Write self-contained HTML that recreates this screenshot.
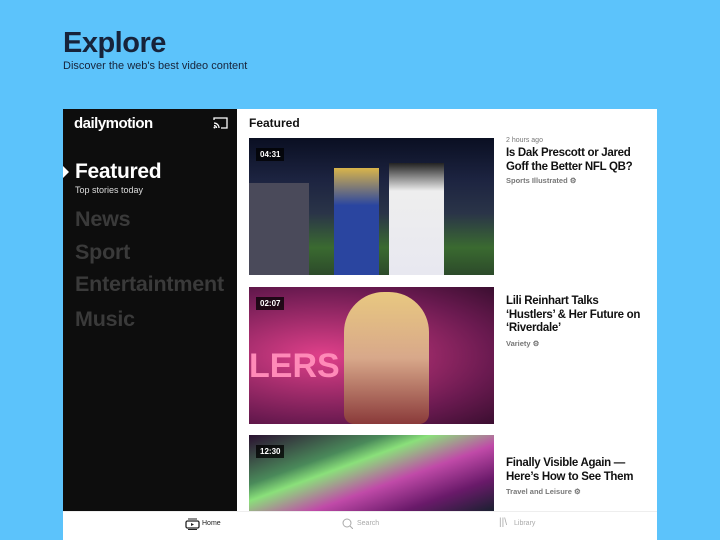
<html><head><style>
body{margin:0;width:720px;height:540px;background:#5cc3fb;font-family:"Liberation Sans",sans-serif;position:relative;overflow:hidden}
.a{position:absolute}
.t{font-weight:bold;color:#111;font-size:11.5px;line-height:13.5px;letter-spacing:-0.3px;white-space:nowrap}
.s{font-size:7.5px;color:#777;font-weight:bold}
.d{background:rgba(0,0,0,.75);color:#fff;font-size:8px;padding:2px 4px;font-weight:bold}
.nav{font-weight:900;font-size:21.5px;color:#3a3a3a;left:75px;letter-spacing:-0.2px}
</style></head><body>
<div class="a" style="left:63px;top:27px;font-size:29px;font-weight:900;color:#17233a;letter-spacing:-0.5px">Explore</div>
<div class="a" style="left:63px;top:60px;font-size:11px;color:#17233a">Discover the web's best video content</div>
<div class="a" style="left:63px;top:109px;width:594px;height:431px;background:#fff"></div>
<div class="a" style="left:63px;top:109px;width:174px;height:402px;background:#0d0d0d"></div>
<div class="a" style="left:74px;top:115px;color:#fff;font-weight:bold;font-size:15px;letter-spacing:-0.5px">dailymotion</div>
<svg class="a" style="left:213px;top:117px" width="15" height="12" viewBox="0 0 15 12"><path d="M1 3V1h13v10H8M1 6a5 5 0 0 1 5 5M1 8.5a2.5 2.5 0 0 1 2.5 2.5" stroke="#fff" stroke-width="1.3" fill="none"/><circle cx="1.5" cy="10.5" r="1" fill="#fff"/></svg>
<div class="a" style="left:63px;top:166px;width:0;height:0;border-left:6px solid #fff;border-top:6px solid transparent;border-bottom:6px solid transparent"></div>
<div class="a" style="left:75px;top:160px;font-weight:900;font-size:21px;color:#fff;letter-spacing:-0.3px">Featured</div>
<div class="a" style="left:75px;top:185px;font-size:9px;color:#ddd">Top stories today</div>
<div class="a nav" style="top:207px">News</div>
<div class="a nav" style="top:240px">Sport</div>
<div class="a nav" style="top:272px">Entertaintment</div>
<div class="a nav" style="top:307px">Music</div>
<div class="a" style="left:249px;top:116px;font-weight:bold;font-size:12px;color:#111">Featured</div>
<div class="a" style="left:249px;top:138px;width:245px;height:137px;background:linear-gradient(180deg,#0a0f22 0%,#1c2340 30%,#2a3448 55%,#3a6a30 80%,#2c4a2a 100%)"><div style="position:absolute;left:85px;top:30px;width:45px;height:107px;background:linear-gradient(#d9b44a,#2a45a0 35%,#2a45a0)"></div><div style="position:absolute;left:140px;top:25px;width:55px;height:112px;background:linear-gradient(#222 0%,#eee 25%,#e8e8f0)"></div><div style="position:absolute;left:0;top:45px;width:60px;height:92px;background:#4a4a5a"></div></div>
<div class="a d" style="left:256px;top:148px">04:31</div>
<div class="a" style="left:506px;top:137px;font-size:7px;color:#777">2 hours ago</div>
<div class="a t" style="left:506px;top:147px">Is Dak Prescott or Jared<br>Goff the Better NFL QB?</div>
<div class="a s" style="left:506px;top:176px">Sports Illustrated ⚙</div>
<div class="a" style="left:249px;top:287px;width:245px;height:137px;background:radial-gradient(ellipse at 30% 50%,#e0408a,#6a1a50 70%,#3a0e30)"><div style="position:absolute;left:0;top:60px;font-size:34px;font-weight:900;color:#ff8ab8">LERS</div><div style="position:absolute;left:95px;top:5px;width:85px;height:132px;border-radius:40px 40px 10px 10px;background:linear-gradient(#e8c880,#d8a88a 50%,#8a3a3a)"></div></div>
<div class="a d" style="left:256px;top:297px">02:07</div>
<div class="a t" style="left:506px;top:295px">Lili Reinhart Talks<br>‘Hustlers’ &amp; Her Future on<br>‘Riverdale’</div>
<div class="a s" style="left:506px;top:339px">Variety ⚙</div>
<div class="a" style="left:249px;top:435px;width:245px;height:76px;background:linear-gradient(160deg,#2a1030 0%,#4a8a5a 30%,#8ae07a 40%,#c04aa8 60%,#6a1a6a 80%,#1a2030)"></div>
<div class="a d" style="left:256px;top:445px">12:30</div>
<div class="a t" style="left:506px;top:457px">Finally Visible Again —<br>Here’s How to See Them</div>
<div class="a s" style="left:506px;top:487px">Travel and Leisure ⚙</div>
<div class="a" style="left:63px;top:511px;width:594px;height:1px;background:#eee"></div>
<svg class="a" style="left:185px;top:518px" width="15" height="12"><rect x="1" y="3" width="13" height="7" rx="1.5" stroke="#222" stroke-width="1.3" fill="none"/><path d="M3 1h9M3 11.5h9" stroke="#222"/><path d="M6 5l3 1.5-3 1.5z" fill="#222"/></svg>
<div class="a" style="left:202px;top:520px;font-size:7px;color:#222">Home</div>
<svg class="a" style="left:342px;top:518px" width="11" height="11"><circle cx="5" cy="5" r="4" stroke="#aaa" fill="none"/><path d="M8 8l3 3" stroke="#aaa"/></svg>
<div class="a" style="left:357px;top:520px;font-size:7px;color:#aaa">Search</div>
<div class="a" style="left:499px;top:517px;font-size:10px;color:#aaa">||\</div>
<div class="a" style="left:514px;top:520px;font-size:7px;color:#aaa">Library</div>
</body></html>
